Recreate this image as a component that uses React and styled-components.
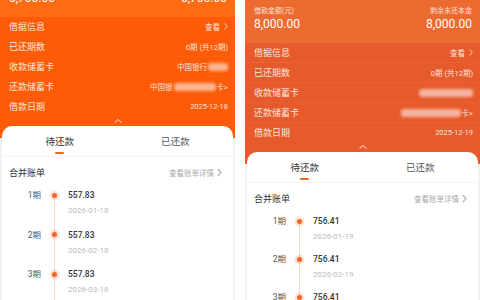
import React from 'react'
import styled, { createGlobalStyle } from 'styled-components'

const GlobalStyle = createGlobalStyle`
  html, body {
    margin: 0;
    padding: 0;
    background: #fff;
    font-family: Roboto, "Noto Sans CJK SC", sans-serif;
  }
  * { box-sizing: border-box; }
`

const tones = {
  bright: { top: '#ff6b12', rows: '#fd5b07', line: 'rgba(255, 255, 255, 0.03)' },
  muted: { top: '#ec6b30', rows: '#e65a2b', line: 'rgba(255, 255, 255, 0.06)' },
}

const loans = [
  {
    tone: 'bright',
    offset: -26,
    amount: '5,700.00',
    remain: '5,700.00',
    date: '2025-12-18',
    receive: { prefix: '中国银行', blur: 20, suffix: '' },
    repay: { prefix: '中国银', blur: 42, suffix: '卡>' },
    step: 39.5,
    bills: [
      { period: '1期', amount: '557.83', date: '2026-01-18' },
      { period: '2期', amount: '557.83', date: '2026-02-18' },
      { period: '3期', amount: '557.83', date: '2026-03-18' },
      { period: '4期', amount: '557.83', date: '2026-04-18' },
    ],
  },
  {
    tone: 'muted',
    offset: 0,
    amount: '8,000.00',
    remain: '8,000.00',
    date: '2025-12-19',
    receive: { prefix: '', blur: 54, suffix: '' },
    repay: { prefix: '', blur: 60, suffix: '卡>' },
    step: 38,
    bills: [
      { period: '1期', amount: '756.41', date: '2026-01-19' },
      { period: '2期', amount: '756.41', date: '2026-02-19' },
      { period: '3期', amount: '756.41', date: '2026-03-19' },
    ],
  },
]

const ChevronRight = ({ color = '#fff', w = 4, h = 7 }) => (
  <svg width={w} height={h} viewBox="0 0 4 7" fill="none">
    <path d="M0.6 0.6 L3.2 3.5 L0.6 6.4" stroke={color} strokeWidth="0.9" />
  </svg>
)

const ChevronUp = () => (
  <svg width="8" height="4" viewBox="0 0 8 4" fill="none">
    <path d="M0.5 3.6 L4 0.6 L7.5 3.6" stroke="rgba(255,255,255,0.9)" strokeWidth="1" />
  </svg>
)

const Loan = ({ loan }) => (
  <Panel>
    <Scroll style={{ marginTop: loan.offset }}>
      <Header tone={loan.tone}>
        <HeadCol>
          <HeadLabel>借款金额(元)</HeadLabel>
          <HeadValue>{loan.amount}</HeadValue>
        </HeadCol>
        <HeadCol align="flex-end">
          <HeadLabel>剩余未还本金</HeadLabel>
          <HeadValue>{loan.remain}</HeadValue>
        </HeadCol>
      </Header>
      <Rows tone={loan.tone}>
        <Row tone={loan.tone}>
          <RowLabel>借据信息</RowLabel>
          <RowValue>查看 <ChevronRight color="rgba(255,255,255,0.85)" /></RowValue>
        </Row>
        <Row tone={loan.tone}>
          <RowLabel>已还期数</RowLabel>
          <RowValue>0期 (共12期)</RowValue>
        </Row>
        <Row tone={loan.tone}>
          <RowLabel>收款储蓄卡</RowLabel>
          <RowValue>
            {loan.receive.prefix}
            <Blur w={loan.receive.blur} />
            {loan.receive.suffix}
          </RowValue>
        </Row>
        <Row tone={loan.tone}>
          <RowLabel>还款储蓄卡</RowLabel>
          <RowValue>
            {loan.repay.prefix}
            <Blur w={loan.repay.blur} />
            {loan.repay.suffix}
          </RowValue>
        </Row>
        <Row tone={loan.tone} last>
          <RowLabel>借款日期</RowLabel>
          <RowValue>{loan.date}</RowValue>
        </Row>
        <Fold><ChevronUp /></Fold>
      </Rows>
      <Body tone={loan.tone}>
        <Card>
          <Tabs>
            <Tab active>待还款</Tab>
            <Tab>已还款</Tab>
          </Tabs>
          <Summary>
            <SummaryTitle>合并账单</SummaryTitle>
            <SummaryLink>
              查看账单详情 <ChevronRight color="#aaa" w={5} h={9} />
            </SummaryLink>
          </Summary>
          {loan.bills.map((bill, index) => (
            <Bill key={index} step={loan.step}>
              <Period>{bill.period}</Period>
              <Track first={index === 0}>
                <Dot />
              </Track>
              <BillInfo>
                <BillAmount>{bill.amount}</BillAmount>
                <BillDate>{bill.date}</BillDate>
              </BillInfo>
            </Bill>
          ))}
        </Card>
      </Body>
    </Scroll>
  </Panel>
)

const App = () => (
  <>
    <GlobalStyle />
    <Page>
      {loans.map((loan, index) => (
        <Loan key={index} loan={loan} />
      ))}
    </Page>
  </>
)

export default App

const Page = styled.div`
  display: flex;
  gap: 10px;
  width: 480px;
  height: 300px;
  overflow: hidden;
  background: #fff;
`
const Panel = styled.div`
  width: 235px;
  height: 300px;
  overflow: hidden;
  background: #f2f2f2;
`
const Scroll = styled.div`
  display: flex;
  flex-direction: column;
`
const Header = styled.div`
  height: 43px;
  display: flex;
  justify-content: space-between;
  padding: 6px 8px 0 9px;
  background: ${p => tones[p.tone].top};
`
const HeadCol = styled.div`
  display: flex;
  flex-direction: column;
  align-items: ${p => p.align || 'flex-start'};
`
const HeadLabel = styled.div`
  font-size: 7px;
  line-height: 10px;
  color: rgba(255, 255, 255, 0.8);
`
const HeadValue = styled.div`
  font-size: 12px;
  line-height: 16px;
  color: #fff;
`
const Rows = styled.div`
  display: flex;
  flex-direction: column;
  background: ${p => tones[p.tone].rows};
`
const Row = styled.div`
  height: 20px;
  display: flex;
  align-items: center;
  justify-content: space-between;
  padding: 0 7px 0 9px;
  border-bottom: 1px solid ${p => (p.last ? 'transparent' : tones[p.tone].line)};
`
const RowLabel = styled.span`
  font-size: 9px;
  color: rgba(255, 255, 255, 0.86);
`
const RowValue = styled.span`
  display: flex;
  align-items: center;
  gap: 1px;
  font-size: 7.5px;
  color: rgba(255, 255, 255, 0.85);
  svg { margin-left: 3px; }
`
const Blur = styled.span`
  display: inline-block;
  width: ${p => p.w}px;
  height: 8px;
  border-radius: 3px;
  background: rgba(255, 255, 255, 0.55);
  filter: blur(1.5px);
`
const Fold = styled.div`
  height: 9px;
  display: flex;
  justify-content: center;
  align-items: flex-start;
  padding-top: 2px;
`
const Body = styled.div`
  padding: 0 2px;
  background: linear-gradient(to bottom, ${p => tones[p.tone].rows} 12px, #f2f2f2 12px);
`
const Card = styled.div`
  background: #fff;
  border-radius: 10px 10px 0 0;
  min-height: 200px;
`
const Tabs = styled.div`
  height: 31px;
  display: grid;
  grid-template-columns: 1fr 1fr;
  border-bottom: 1px solid #f4f4f4;
`
const Tab = styled.div`
  display: flex;
  flex-direction: column;
  align-items: center;
  padding-top: 10px;
  font-size: 9.5px;
  line-height: 12px;
  color: ${p => (p.active ? '#333' : '#555')};
  &::after {
    content: '';
    display: ${p => (p.active ? 'block' : 'none')};
    width: 9px;
    height: 2px;
    margin-top: 4px;
    border-radius: 1px;
    background: #f26522;
  }
`
const Summary = styled.div`
  height: 30px;
  display: flex;
  align-items: center;
  justify-content: space-between;
  padding: 0 11px 0 7px;
`
const SummaryTitle = styled.span`
  font-size: 9px;
  color: #333;
`
const SummaryLink = styled.span`
  display: flex;
  align-items: center;
  gap: 3px;
  font-size: 7.5px;
  color: #aaa;
`
const Bill = styled.div`
  display: grid;
  grid-template-columns: 39px 26px 1fr;
  height: ${p => p.step}px;
`
const Period = styled.div`
  text-align: right;
  font-size: 8.5px;
  line-height: 16px;
  color: #555;
`
const Track = styled.div`
  display: flex;
  justify-content: center;
  padding-top: 5.5px;
  background-image: linear-gradient(#f9dccd, #f9dccd);
  background-repeat: no-repeat;
  background-size: 1px ${p => (p.first ? 'calc(100% - 8px)' : '100%')};
  background-position: center bottom;
`
const Dot = styled.span`
  width: 5px;
  height: 5px;
  border-radius: 50%;
  background: #f26522;
  box-shadow: 0 0 0 2.5px rgba(242, 101, 34, 0.18);
`
const BillInfo = styled.div`
  display: flex;
  flex-direction: column;
  padding-left: 1px;
`
const BillAmount = styled.div`
  font-size: 8.5px;
  line-height: 16px;
  font-weight: 500;
  color: #333;
`
const BillDate = styled.div`
  font-size: 8px;
  line-height: 16px;
  color: #bbb;
`
